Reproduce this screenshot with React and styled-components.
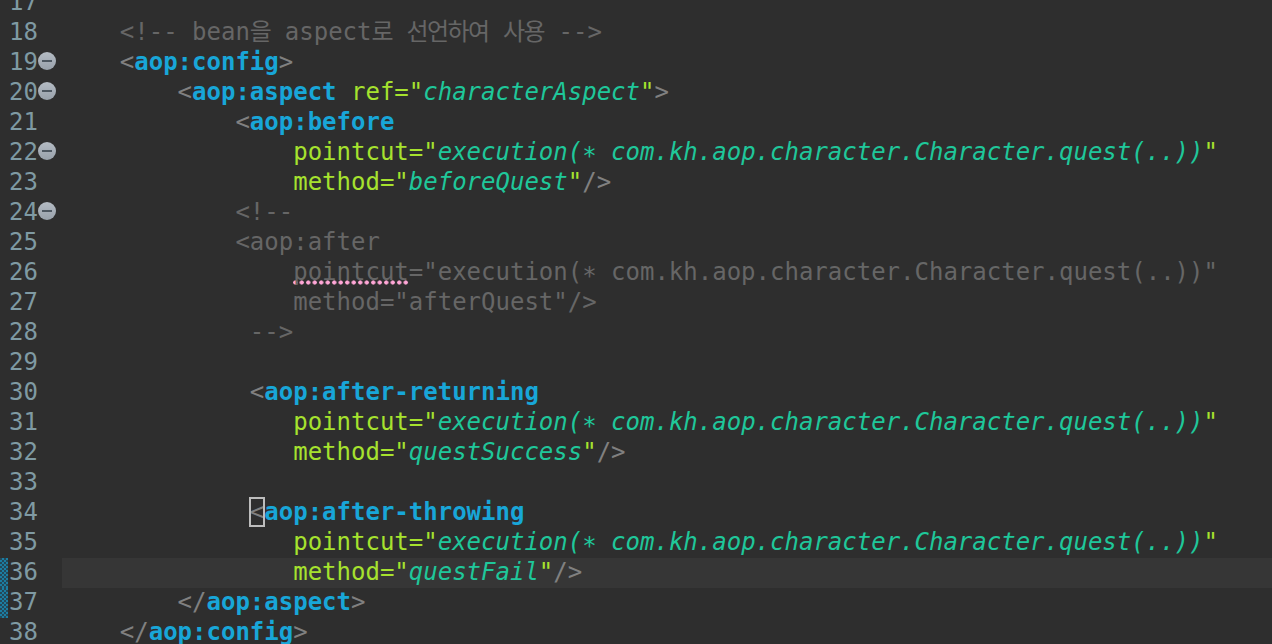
import React from 'react'
import styled, { createGlobalStyle } from 'styled-components'

const GlobalStyle = createGlobalStyle`
  html, body {
    margin: 0;
    height: 100%;
    background: #2e2e2e;
    overflow: hidden;
  }
`

const Editor = styled.div`
  margin-top: -12px;
  font-family: "DejaVu Sans Mono", "Noto Sans CJK KR", monospace;
  font-size: 24px;
  line-height: 28px;
  color: #666666;
`

const Row = styled.div`
  display: flex;
  height: 30px;
`

const Gutter = styled.div`
  flex: 0 0 62px;
  display: flex;
  align-items: flex-start;
  color: #7f9aa3;
`

const Marker = styled.span`
  flex: 0 0 8px;
  align-self: stretch;
  margin-right: 1px;
  ${p => p.$on && `
    background: repeating-conic-gradient(#1c7ea3 0 25%, #24495a 0 50%) 0 0 / 4px 4px;
  `}
`

const LineNumber = styled.span`
  flex: 0 0 29px;
`

const Fold = styled.span`
  flex: 0 0 18px;
  height: 18px;
  margin-top: 4px;
  border-radius: 50%;
  background: linear-gradient(#b4bbc3, #98a1ab);
  display: flex;
  align-items: center;
  justify-content: center;
  &::before {
    content: '';
    width: 10px;
    height: 2px;
    background: #4d5761;
  }
`

const Code = styled.pre`
  flex: 1;
  margin: 0;
  font: inherit;
  white-space: pre;
  ${p => p.$current && 'background: #363636;'}
`

const Tag = styled.span`
  color: #18a6d8;
  font-weight: bold;
`

const Attr = styled.span`
  color: #a6e22e;
`

const Str = styled.span`
  color: #1fc79a;
  font-style: italic;
`

const Star = styled.span`
  vertical-align: -4px;
`

const Bracket = styled.span`
  color: #808080;
`

const Matched = styled.span`
  color: #808080;
  outline: 2px solid #bdbdbd;
  outline-offset: -1px;
`

const Spell = styled.span`
  background: radial-gradient(circle, #ffa6d6 1.8px, transparent 2.4px) -1px 22px / 6.5px 5px repeat-x;
`

const Hangul = styled.span`
  font-family: "Noto Sans CJK KR", sans-serif;
  line-height: 0;
  letter-spacing: -1.55px;
`

const pointcut = (
  <>
    {'                '}
    <Attr>pointcut=</Attr>
    <Attr>"</Attr>
    <Str>execution(<Star>*</Star> com.kh.aop.character.Character.quest(..))</Str>
    <Attr>"</Attr>
  </>
)

const method = name => (
  <>
    {'                '}
    <Attr>method=</Attr>
    <Attr>"</Attr>
    <Str>{name}</Str>
    <Attr>"</Attr>
    <Bracket>/&gt;</Bracket>
  </>
)

const lines = [
  { n: 17 },
  {
    n: 18,
    code: (
      <>
        {'    <!-- bean'}
        <Hangul>을</Hangul>
        {' aspect'}
        <Hangul>로</Hangul> <Hangul>선언하여</Hangul> <Hangul>사용</Hangul>
        {' -->'}
      </>
    ),
  },
  {
    n: 19,
    fold: true,
    code: (
      <>
        {'    '}
        <Bracket>&lt;</Bracket>
        <Tag>aop:config</Tag>
        <Bracket>&gt;</Bracket>
      </>
    ),
  },
  {
    n: 20,
    fold: true,
    code: (
      <>
        {'        '}
        <Bracket>&lt;</Bracket>
        <Tag>aop:aspect</Tag> <Attr>ref=</Attr>
        <Attr>"</Attr>
        <Str>characterAspect</Str>
        <Attr>"</Attr>
        <Bracket>&gt;</Bracket>
      </>
    ),
  },
  {
    n: 21,
    code: (
      <>
        {'            '}
        <Bracket>&lt;</Bracket>
        <Tag>aop:before</Tag>
      </>
    ),
  },
  { n: 22, fold: true, code: pointcut },
  { n: 23, code: method('beforeQuest') },
  { n: 24, fold: true, code: '            <!--' },
  { n: 25, code: '            <aop:after' },
  {
    n: 26,
    code: (
      <>
        {'                '}
        <Spell>pointcut</Spell>
        {'="execution('}
        <Star>*</Star>
        {' com.kh.aop.character.Character.quest(..))"'}
      </>
    ),
  },
  { n: 27, code: '                method="afterQuest"/>' },
  { n: 28, code: '             -->' },
  { n: 29 },
  {
    n: 30,
    code: (
      <>
        {'             '}
        <Bracket>&lt;</Bracket>
        <Tag>aop:after-returning</Tag>
      </>
    ),
  },
  { n: 31, code: pointcut },
  { n: 32, code: method('questSuccess') },
  { n: 33 },
  {
    n: 34,
    code: (
      <>
        {'             '}
        <Matched>&lt;</Matched>
        <Tag>aop:after-throwing</Tag>
      </>
    ),
  },
  { n: 35, code: pointcut },
  { n: 36, marker: true, current: true, code: method('questFail') },
  {
    n: 37,
    marker: true,
    code: (
      <>
        {'        '}
        <Bracket>&lt;/</Bracket>
        <Tag>aop:aspect</Tag>
        <Bracket>&gt;</Bracket>
      </>
    ),
  },
  {
    n: 38,
    code: (
      <>
        {'    '}
        <Bracket>&lt;/</Bracket>
        <Tag>aop:config</Tag>
        <Bracket>&gt;</Bracket>
      </>
    ),
  },
]

export default function App() {
  return (
    <>
      <GlobalStyle />
      <Editor>
        {lines.map(line => (
          <Row key={line.n}>
            <Gutter>
              <Marker $on={line.marker} />
              <LineNumber>{line.n}</LineNumber>
              {line.fold && <Fold />}
            </Gutter>
            <Code $current={line.current}>{line.code}</Code>
          </Row>
        ))}
      </Editor>
    </>
  )
}
